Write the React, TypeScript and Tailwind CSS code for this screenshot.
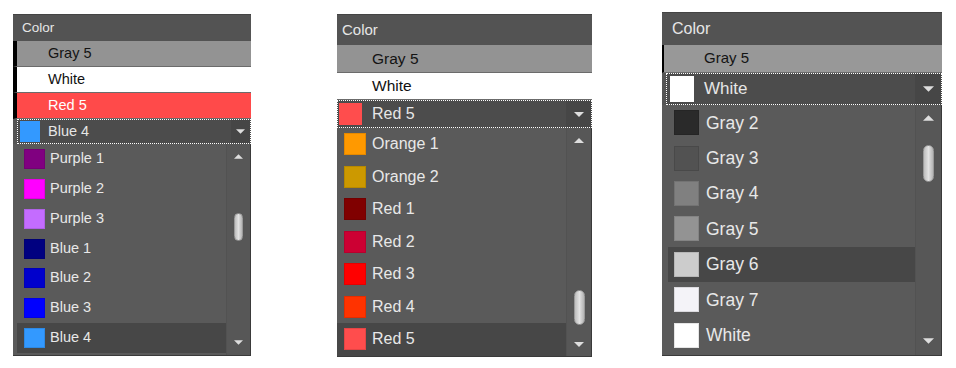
type Swatch = { name: string; color: string };

type TopRow = { name: string; className: string };

type PanelSizes = {
  panel: string;
  header: string;
  row: string;
  combo: string;
  comboSwatch: string;
  comboText: string;
  button: string;
  list: string;
  items: string;
  item: string;
  itemSwatch: string;
  itemText: string;
  bar: string;
  barTop: string;
  barBottom: string;
  thumb: string;
  arrow: string;
};

interface ColorPanelProps {
  sizes: PanelSizes;
  topRows: TopRow[];
  current: Swatch;
  items: Swatch[];
  selected: string;
}

function Arrow({ up, className }: { up?: boolean; className: string }) {
  return (
    <svg viewBox="0 0 10 5" className={className}>
      <polygon points={up ? '0,5 10,5 5,0' : '0,0 10,0 5,5'} fill="#dedede" />
    </svg>
  );
}

function ColorPanel({ sizes, topRows, current, items, selected }: ColorPanelProps) {
  return (
    <div className={`flex shrink-0 flex-col bg-[#555555] ${sizes.panel}`}>
      <div className={`flex items-center border-t border-[#444444] bg-[#535353] text-[#e6e6e6] ${sizes.header}`}>
        Color
      </div>
      {topRows.map(row => (
        <div key={row.name} className={`flex items-center border-b border-[#6b6b6b] ${sizes.row} ${row.className}`}>
          {row.name}
        </div>
      ))}
      <div className={`flex items-center border border-dotted border-white bg-[#4c4c4c] ${sizes.combo}`}>
        <div className={`shrink-0 ${sizes.comboSwatch}`} style={{ backgroundColor: current.color }} />
        <span className={`flex-1 text-[#e6e6e6] ${sizes.comboText}`}>{current.name}</span>
        <div className={`flex h-full items-center justify-center bg-[#464646] ${sizes.button}`}>
          <Arrow className={sizes.arrow} />
        </div>
      </div>
      <div className={`flex border-r border-b border-[#3a3a3a] bg-[#5a5a5a] ${sizes.list}`}>
        <div className={`flex flex-1 flex-col ${sizes.items}`}>
          {items.map(item => (
            <div
              key={item.name}
              className={`flex items-center ${sizes.item} ${item.name === selected ? 'bg-[#474747]' : ''}`}
            >
              <div
                className={`shrink-0 border border-black/10 ${sizes.itemSwatch}`}
                style={{ backgroundColor: item.color }}
              />
              <span className={`text-[#e8e8e8] ${sizes.itemText}`}>{item.name}</span>
            </div>
          ))}
        </div>
        <div className={`flex flex-col items-center border-l border-[#525252] bg-[#575757] ${sizes.bar}`}>
          <div className={`flex w-full items-center justify-center ${sizes.barTop}`}>
            <Arrow up className={sizes.arrow} />
          </div>
          <div
            className={`rounded-full border border-[#9a9a9a] bg-gradient-to-r from-[#bdbdbd] via-[#e2e2e2] to-[#b4b4b4] ${sizes.thumb}`}
          />
          <div className="flex-1" />
          <div className={`flex w-full items-center justify-center ${sizes.barBottom}`}>
            <Arrow className={sizes.arrow} />
          </div>
        </div>
      </div>
    </div>
  );
}

const purplesBlues: Swatch[] = [
  { name: 'Purple 1', color: '#800080' },
  { name: 'Purple 2', color: '#ff00ff' },
  { name: 'Purple 3', color: '#c46cff' },
  { name: 'Blue 1', color: '#000080' },
  { name: 'Blue 2', color: '#0000cc' },
  { name: 'Blue 3', color: '#0000ff' },
  { name: 'Blue 4', color: '#3399ff' },
];

const orangesReds: Swatch[] = [
  { name: 'Orange 1', color: '#ff9900' },
  { name: 'Orange 2', color: '#cc9900' },
  { name: 'Red 1', color: '#800000' },
  { name: 'Red 2', color: '#cc0033' },
  { name: 'Red 3', color: '#ff0000' },
  { name: 'Red 4', color: '#ff3300' },
  { name: 'Red 5', color: '#ff4d4d' },
];

const grays: Swatch[] = [
  { name: 'Gray 2', color: '#2a2a2a' },
  { name: 'Gray 3', color: '#525252' },
  { name: 'Gray 4', color: '#808080' },
  { name: 'Gray 5', color: '#939393' },
  { name: 'Gray 6', color: '#cccccc' },
  { name: 'Gray 7', color: '#f4f3f8' },
  { name: 'White', color: '#ffffff' },
];

const small: PanelSizes = {
  panel: 'mt-[2px] ml-[13px] w-[238px]',
  header: 'h-[27px] pl-[9px] text-[13.5px]',
  row: 'h-[26px] border-l-4 border-l-black pl-[31px] text-[14.5px] last-of-type:h-[25px]',
  combo: 'ml-[4px] h-[25px]',
  comboSwatch: 'ml-[2px] h-[21px] w-[20px]',
  comboText: 'ml-[8px] text-[14.5px]',
  button: 'w-[19px]',
  list: 'h-[212px]',
  items: 'pl-[4px] pb-[2px]',
  item: 'h-[30px]',
  itemSwatch: 'ml-[7px] h-[20px] w-[21px]',
  itemText: 'ml-[5px] text-[14.5px]',
  bar: 'w-[24px]',
  barTop: 'h-[24px]',
  barBottom: 'h-[26px]',
  thumb: 'mt-[45px] h-[28px] w-[9px]',
  arrow: 'h-[5px] w-[9px]',
};

const medium: PanelSizes = {
  panel: 'mt-[2px] ml-[86px] w-[255px]',
  header: 'h-[31px] pl-[5px] text-[15px]',
  row: 'h-[27.5px] pl-[35px] text-[15.5px]',
  combo: 'h-[28px]',
  comboSwatch: 'ml-[1px] h-[22px] w-[23px]',
  comboText: 'ml-[10px] text-[16px]',
  button: 'w-[25px]',
  list: 'h-[229px]',
  items: '',
  item: 'h-[32.5px]',
  itemSwatch: 'ml-[7px] h-[22px] w-[22px]',
  itemText: 'ml-[6px] text-[16px]',
  bar: 'w-[25px]',
  barTop: 'h-[24px]',
  barBottom: 'h-[23px]',
  thumb: 'mt-[138px] h-[35px] w-[11px]',
  arrow: 'h-[5px] w-[10px]',
};

const large: PanelSizes = {
  panel: 'ml-[70px] w-[280px]',
  header: 'h-[33px] pl-[10px] text-[16px]',
  row: 'h-[28px] border-l-2 border-l-black pl-[40px] text-[15px]',
  combo: 'ml-[4px] h-[32px]',
  comboSwatch: 'ml-[3px] h-[26px] w-[24px]',
  comboText: 'ml-[10px] text-[17px]',
  button: 'w-[26px]',
  list: 'h-[251px]',
  items: 'pl-[6px] pb-[2px]',
  item: 'h-[35.5px]',
  itemSwatch: 'ml-[6px] h-[25px] w-[25px]',
  itemText: 'ml-[7px] text-[17.5px]',
  bar: 'w-[26px]',
  barTop: 'h-[26px]',
  barBottom: 'h-[28px]',
  thumb: 'mt-[14px] h-[37px] w-[11px]',
  arrow: 'h-[6px] w-[11px]',
};

export default function App() {
  return (
    <div className="flex h-[368px] w-[956px] items-start bg-white pt-[12px] font-['Liberation_Sans',Arial,sans-serif]">
      <ColorPanel
        sizes={small}
        topRows={[
          { name: 'Gray 5', className: 'bg-[#939393] text-[#141414]' },
          { name: 'White', className: 'bg-white text-[#111111]' },
          { name: 'Red 5', className: 'bg-[#ff4a4a] text-white' },
        ]}
        current={{ name: 'Blue 4', color: '#3399ff' }}
        items={purplesBlues}
        selected="Blue 4"
      />
      <ColorPanel
        sizes={medium}
        topRows={[
          { name: 'Gray 5', className: 'bg-[#939393] text-[#141414]' },
          { name: 'White', className: 'bg-white text-[#111111]' },
        ]}
        current={{ name: 'Red 5', color: '#ff4d4d' }}
        items={orangesReds}
        selected="Red 5"
      />
      <ColorPanel
        sizes={large}
        topRows={[{ name: 'Gray 5', className: 'bg-[#989898] text-[#141414]' }]}
        current={{ name: 'White', color: '#ffffff' }}
        items={grays}
        selected="Gray 6"
      />
    </div>
  );
}
